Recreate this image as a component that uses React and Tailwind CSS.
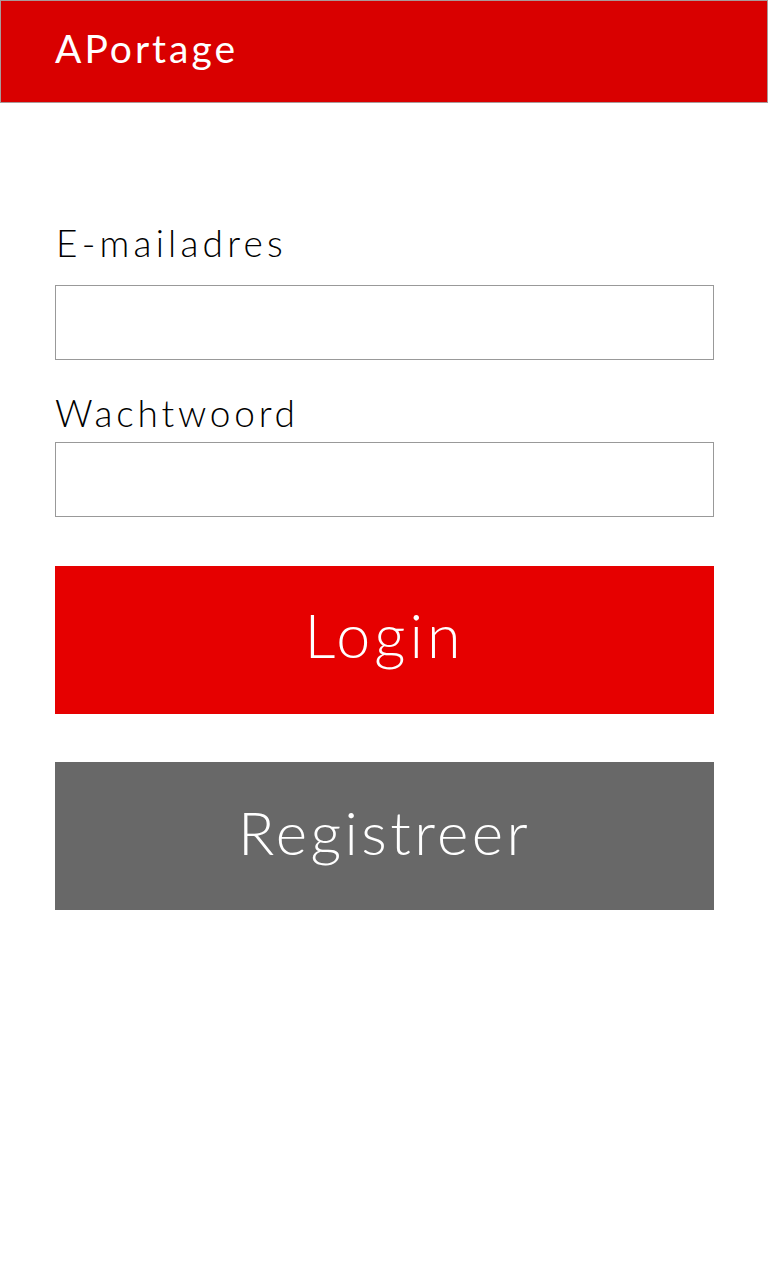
import React from "react";

export default function App() {
  const font = { fontFamily: "Lato, 'Noto Sans', sans-serif" };
  return (
    <div className="min-h-[1280px] w-[768px] bg-white" style={font}>
      <header className="flex h-[103px] items-center border border-[#a99] bg-[#d90000] pb-[6px] pl-[54px]">
        <h1 className="text-[39px] font-normal leading-none tracking-[3px] text-white">APortage</h1>
      </header>
      <main className="flex flex-col px-[55px] pt-[118px]">
        <label className="pl-[1px] text-[37px] font-light leading-[44px] tracking-[4.2px] text-black">E-mailadres</label>
        <input className="mt-[20px] h-[75px] w-[659px] border border-[#999] bg-white" type="email" />
        <label className="mt-[31px] text-[37px] font-light leading-[44px] tracking-[3.8px] text-black">Wachtwoord</label>
        <input className="mt-[7px] h-[75px] w-[659px] border border-[#999] bg-white" type="password" />
        <button className="mt-[49px] flex h-[148px] w-[659px] items-center justify-center bg-[#e60000] pb-[10px] text-[61px] font-light tracking-[4px] text-white">
          Login
        </button>
        <button className="mt-[48px] flex h-[148px] w-[659px] items-center justify-center bg-[#686868] pb-[8px] text-[60px] font-light tracking-[3.4px] text-white">
          Registreer
        </button>
      </main>
    </div>
  );
}
